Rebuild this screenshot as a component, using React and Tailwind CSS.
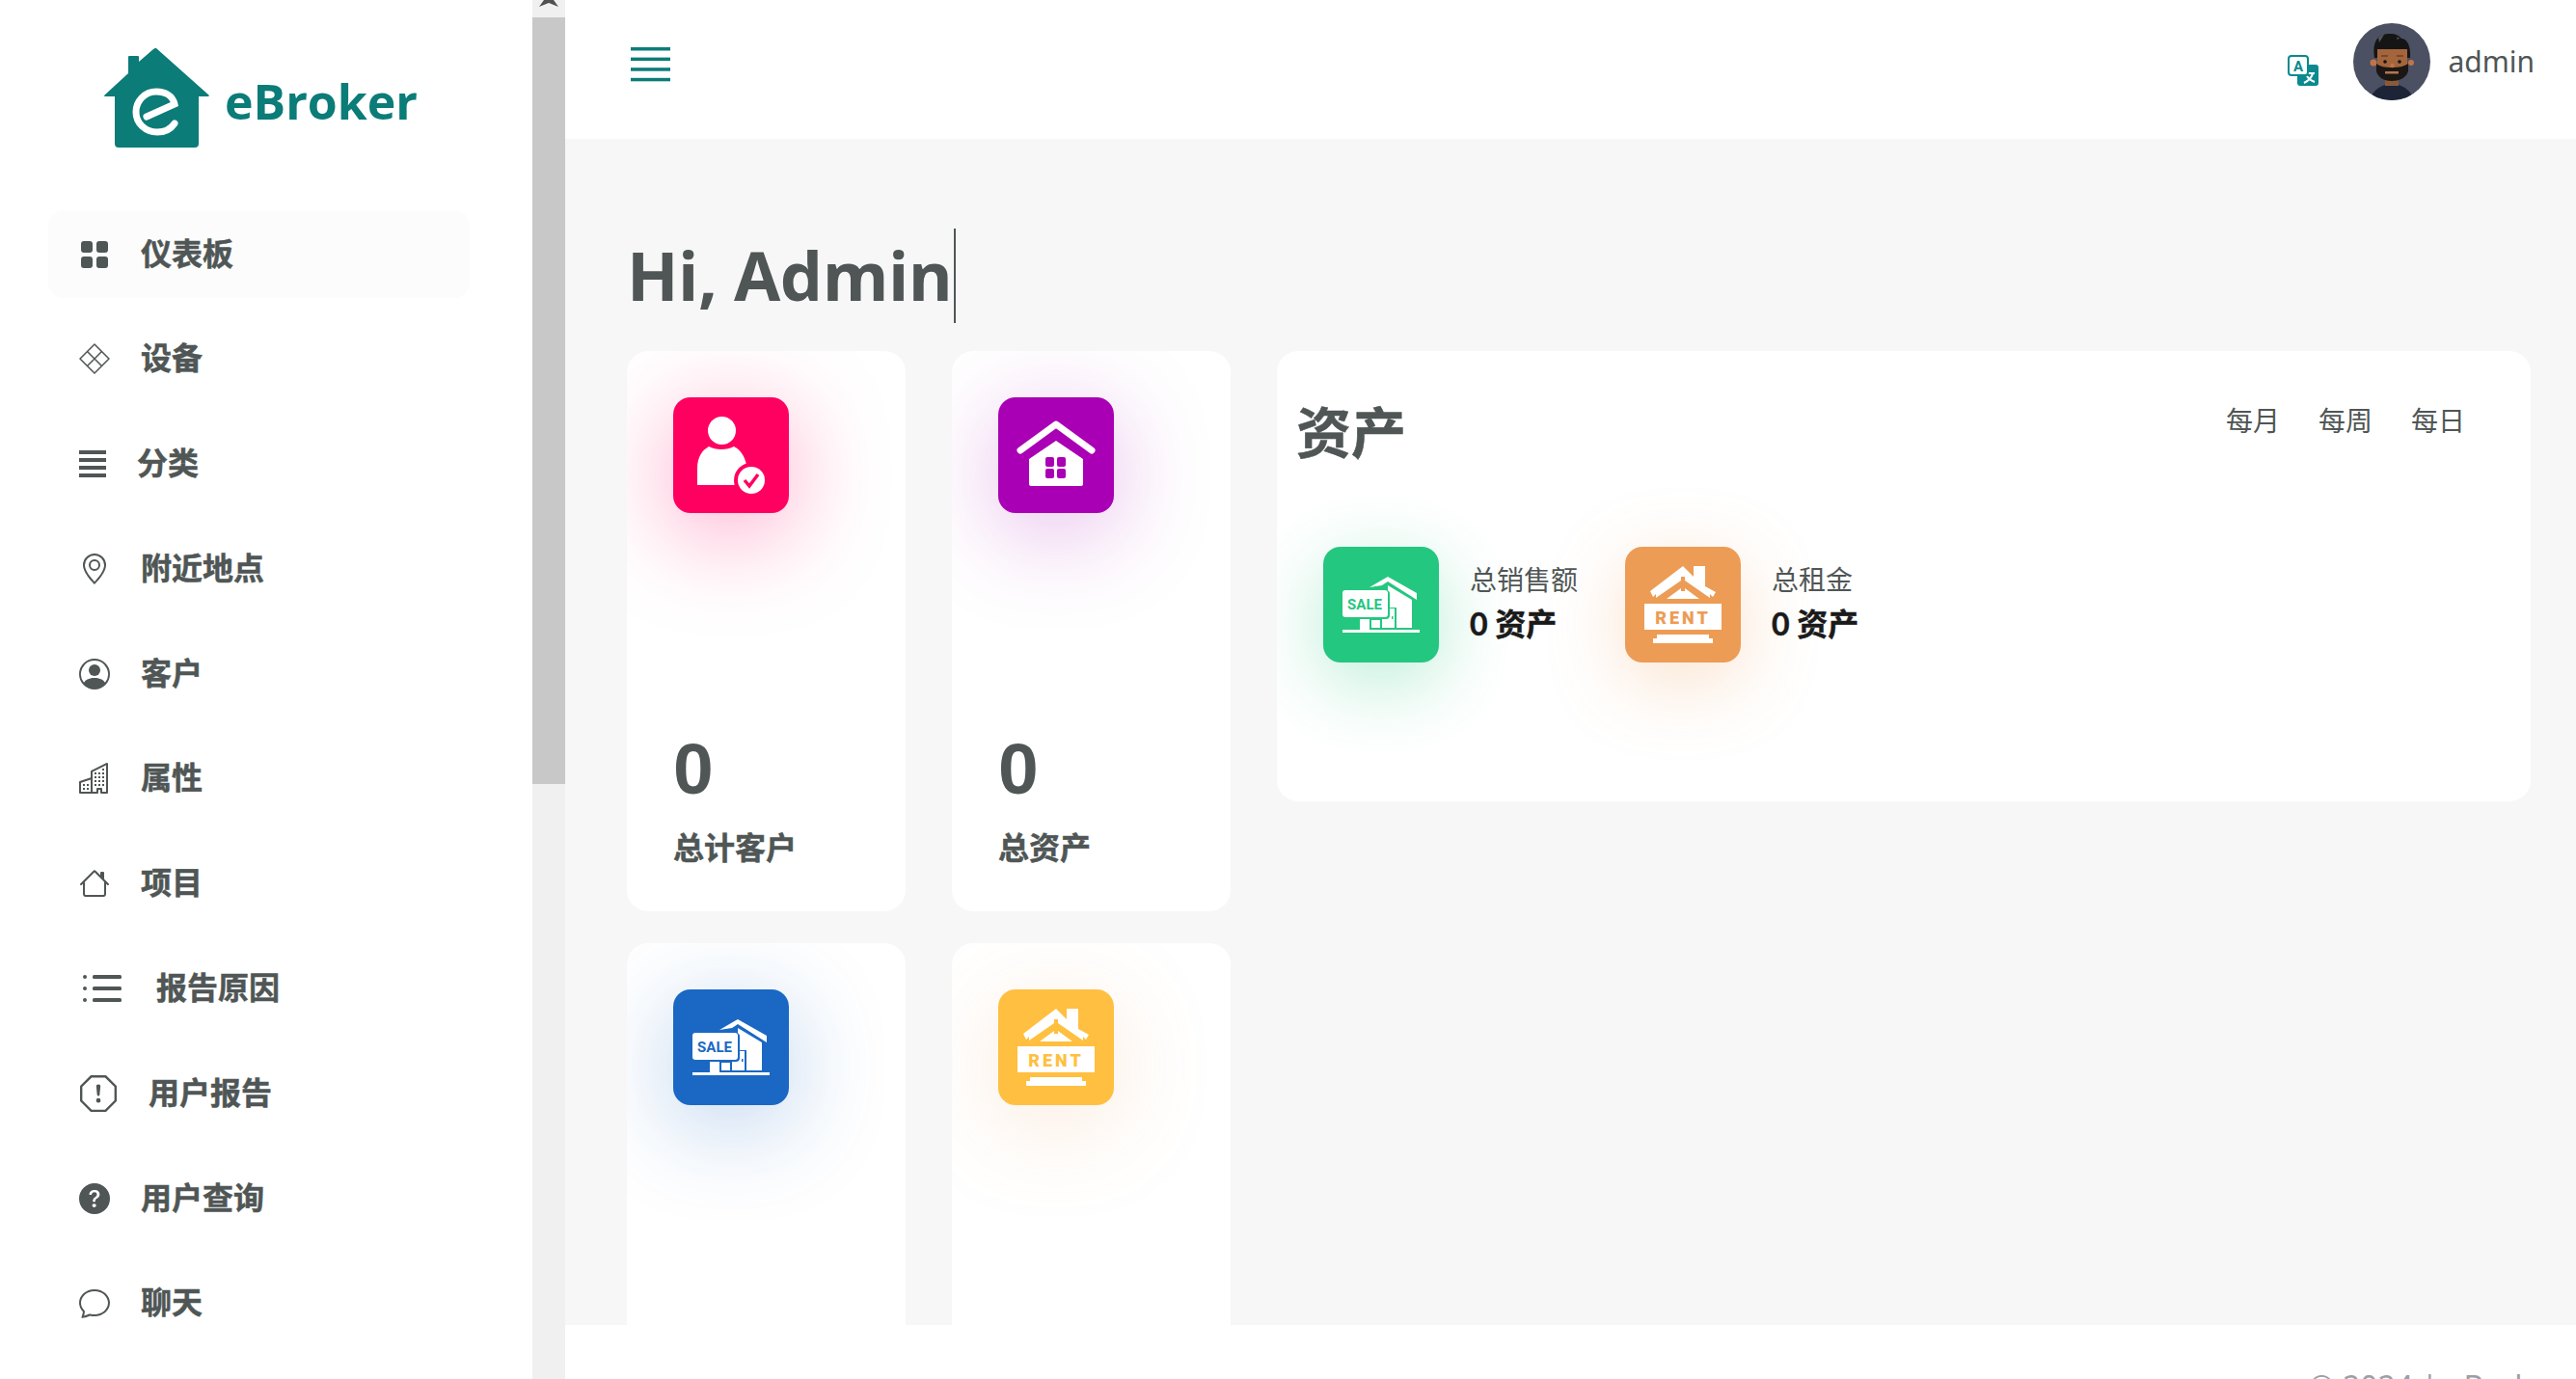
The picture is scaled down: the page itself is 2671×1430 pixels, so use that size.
import {
  BsGridFill,
  BsGeoAlt,
  BsPersonCircle,
  BsBuildings,
  BsHouse,
  BsExclamationOctagon,
  BsQuestionCircleFill,
  BsChat,
} from "react-icons/bs";

const cjk = "font-['Lato','Noto_Sans_CJK_SC',sans-serif]";
const heavy = "font-bold [-webkit-text-stroke:0.5px_currentColor]";

function DiamondIcon() {
  return (
    <svg viewBox="0 0 32 32" className="w-[32px] h-[32px]" fill="none" stroke="currentColor" strokeWidth="1.5" strokeLinejoin="round">
      <path d="M16 1 L31 16 L16 31 L1 16 Z" />
      <path d="M8.5 8.5 L23.5 23.5 M23.5 8.5 L8.5 23.5" />
    </svg>
  );
}

function BarsIcon() {
  return (
    <svg viewBox="0 0 28 28" className="w-[28px] h-[28px]" fill="currentColor">
      <rect x="0" y="0" width="28" height="4" />
      <rect x="0" y="8" width="28" height="4" />
      <rect x="0" y="16" width="28" height="4" />
      <rect x="0" y="24" width="28" height="4" />
    </svg>
  );
}

function ListIcon() {
  return (
    <svg viewBox="0 0 40 28" className="w-[40px] h-[28px]" fill="currentColor">
      <circle cx="2" cy="2" r="2" />
      <circle cx="2" cy="14" r="2" />
      <circle cx="2" cy="26" r="2" />
      <rect x="10" y="0" width="30" height="4" rx="1.5" />
      <rect x="10" y="12" width="30" height="4" rx="1.5" />
      <rect x="10" y="24" width="30" height="4" rx="1.5" />
    </svg>
  );
}

const navItems = [
  { label: "仪表板", icon: <BsGridFill size={32} />, active: true, iconBox: "w-[32px]" },
  { label: "设备", icon: <DiamondIcon />, iconBox: "w-[32px]" },
  { label: "分类", icon: <BarsIcon />, iconBox: "w-[28px]" },
  { label: "附近地点", icon: <BsGeoAlt size={32} />, iconBox: "w-[32px]" },
  { label: "客户", icon: <BsPersonCircle size={32} />, iconBox: "w-[32px]" },
  { label: "属性", icon: <BsBuildings size={32} />, iconBox: "w-[32px]" },
  { label: "项目", icon: <BsHouse size={32} />, iconBox: "w-[32px]" },
  { label: "报告原因", icon: <ListIcon />, iconBox: "w-[48px] pl-[4px]" },
  { label: "用户报告", icon: <BsExclamationOctagon size={38} />, iconBox: "w-[40px] pl-[1px]" },
  { label: "用户查询", icon: <BsQuestionCircleFill size={32} />, iconBox: "w-[32px]" },
  { label: "聊天", icon: <BsChat size={32} />, iconBox: "w-[32px]" },
];

function NavRow({ item }) {
  return (
    <div
      className={`flex items-center gap-[32px] h-[91px] mb-[17.8px] pl-[32px] rounded-[16px] text-[#4f5655] ${
        item.active ? "bg-[#fcfcfc]" : ""
      }`}
    >
      <span className={`flex items-center justify-start shrink-0 ${item.iconBox}`}>{item.icon}</span>
      <span className={`${cjk} ${heavy} text-[32px] leading-none -mt-[2px]`}>{item.label}</span>
    </div>
  );
}

function Logo() {
  return (
    <div className="flex items-start pl-[108px] pt-[50px] h-[218px]">
      <svg viewBox="0 0 109 103" className="w-[109px] h-[103px] shrink-0">
        <path
          fill="#0b7c78"
          d="M54 0 L109 49 Q109 50 107 50 L98 50 L98 99 Q98 103 94 103 L15 103 Q11 103 11 99 L11 50 L1 50 Q0 50 0 49 L25 26 L25 9 Q25 8 26 8 L35 8 Q36 8 36 9 L36 14 L51 1 Q54 -1 54 0 Z"
        />
        <path
          fill="none"
          stroke="#fff"
          strokeWidth="7"
          strokeLinecap="round"
          d="M44 71 L73 58 C71 49 63 45 54 45 C42 45 33 55 33 66 C33 78 43 87 55 87 C63 87 69 84 73 78"
        />
      </svg>
      <span className="ml-[16px] mt-[30px] font-['Open_Sans',sans-serif] font-bold text-[#0b7c78] text-[50px] leading-none">
        eBroker
      </span>
    </div>
  );
}

function Scrollbar() {
  return (
    <div className="w-[34px] h-full bg-[#f0f0f0] shrink-0 flex flex-col">
      <div className="h-[18px] flex items-start justify-center overflow-hidden">
        <svg viewBox="0 0 20 7" className="w-[20px] h-[7px]" fill="#505050">
          <path d="M0 7 L5 0 H15 L20 7 L10 3 Z" />
        </svg>
      </div>
      <div className="h-[795px] bg-[#c8c8c8]" />
    </div>
  );
}

function UserCheckIcon() {
  return (
    <svg viewBox="0 0 120 120" className="w-full h-full">
      <ellipse cx="50.5" cy="34.5" rx="14.5" ry="14.5" fill="#fff" />
      <path fill="#fff" d="M25 91 V74 C25 62 30 55 37 51 C44 55 56 55 63 51 C70 55 74 61 76 70 V91 Z" />
      <circle cx="81" cy="86" r="18" fill="#ff0061" />
      <circle cx="81" cy="86" r="14" fill="#fff" />
      <path d="M74 86 L79 92 L88 80" fill="none" stroke="#ff0061" strokeWidth="3.5" />
    </svg>
  );
}

function HomeIcon() {
  return (
    <svg viewBox="0 0 120 120" className="w-full h-full">
      <path d="M23 55 L60 28 L97 55" fill="none" stroke="#fff" strokeWidth="7" strokeLinecap="round" strokeLinejoin="round" />
      <path fill="#fff" d="M60 45 L88 64 V90 Q88 92 86 92 H34 Q32 92 32 90 V64 Z" />
      <g fill="#aa00b5">
        <rect x="49" y="62" width="9" height="10" rx="2" />
        <rect x="61" y="62" width="9" height="10" rx="2" />
        <rect x="49" y="74" width="9" height="10" rx="2" />
        <rect x="61" y="74" width="9" height="10" rx="2" />
      </g>
    </svg>
  );
}

function SaleIcon({ color }) {
  return (
    <svg viewBox="0 0 120 120" className="w-full h-full">
      <path fill="#fff" d="M48 42 L67 31 L97 48 L97 55 L67 36 L61 40 Z" />
      <path fill="#fff" d="M67 40 L92 55 V84 H76 V63 H67 Z" />
      <path fill="#fff" d="M61 64 H74 V84 H61 Z" />
      <rect x="71" y="72" width="1.5" height="3" fill={color} />
      <path fill="#fff" d="M38 74 H48 V86 H38 Z M50 76 H59 V84 H50 Z" />
      <rect x="20" y="45" width="49" height="30" rx="4" fill={color} />
      <rect x="20" y="45" width="47" height="28" rx="3" fill="#fff" />
      <text x="43" y="65" textAnchor="middle" fontFamily="Roboto, sans-serif" fontWeight="700" fontSize="15" fill={color}>
        SALE
      </text>
      <rect x="20" y="86" width="80" height="3" fill="#fff" />
    </svg>
  );
}

function RentIcon({ color }) {
  return (
    <svg viewBox="0 0 120 120" className="w-full h-full">
      <path fill="#fff" d="M26 46 L60 20 L71 31 V20 H83 V41 L94 47 L91 52 L88 49 V53 L62 35 V31 H58 V35 L32 53 V49 L29 52 Z" />
      <path fill="#fff" d="M43 54 L58 43 V46 H62 V43 L77 54 Z" />
      <rect x="20" y="59" width="80" height="27" fill="#fff" />
      <text x="60" y="79.5" textAnchor="middle" fontFamily="Roboto, sans-serif" fontWeight="900" fontSize="18" letterSpacing="3" fill={color}>
        RENT
      </text>
      <rect x="33" y="91" width="54" height="5" fill="#fff" />
      <rect x="29" y="95" width="62" height="5" fill="#fff" />
    </svg>
  );
}

function TranslateIcon() {
  return (
    <svg viewBox="0 0 32 32" className="w-[32px] h-[32px] mt-[2px]">
      <rect x="10" y="10" width="22" height="22" rx="3" fill="#0a8a8f" />
      <path d="M17 19 H28 M26 19 C25 24 21 27 17 29 M20 22 C22 25 25 27 28 28" fill="none" stroke="#fff" strokeWidth="2" />
      <rect x="1" y="1" width="20" height="20" rx="3" fill="#fff" stroke="#0a8a8f" strokeWidth="2" />
      <text x="11" y="17" textAnchor="middle" fontFamily="Roboto, sans-serif" fontWeight="700" fontSize="15" fill="#0a8a8f">
        A
      </text>
    </svg>
  );
}

function Avatar() {
  return (
    <svg viewBox="0 0 80 80" className="w-[80px] h-[80px] rounded-full shrink-0">
      <rect width="80" height="80" fill="#4b5062" />
      <ellipse cx="40" cy="86" rx="24" ry="23" fill="#1d2438" />
      <rect x="33" y="56" width="14" height="9" fill="#8a5a38" />
      <circle cx="21" cy="41" r="3.5" fill="#c0744a" />
      <circle cx="60" cy="41" r="3" fill="#c0744a" />
      <path fill="#151515" d="M22 36 C20 20 24 11 38 11 C44 11 48 13 50 16 C56 16 60 24 59 36 L56 36 L55 27 L26 27 L25 36 Z" />
      <path fill="#555" d="M26 15 C28 13 30 12 32 12 L27 20 Z M46 14 L48 16 L45 17 Z" />
      <path fill="#a5653c" d="M25 27 H56 V48 C56 54 48 56 40 56 C32 56 25 54 25 48 Z" />
      <path fill="#1a1715" d="M24 42 C28 45 33 46 40 46 C47 46 52 45 57 42 V50 C55 57 47 60 40 60 C33 60 26 57 24 50 Z" />
      <rect x="33" y="50" width="14" height="2.5" fill="#b5764a" />
      <circle cx="33" cy="40" r="1.8" fill="#111" />
      <circle cx="48" cy="40" r="1.8" fill="#111" />
      <path d="M29 34 H36 M45 34 H52" stroke="#4a2c18" strokeWidth="1.2" />
      <circle cx="40.5" cy="44" r="2.2" fill="#c0744a" />
    </svg>
  );
}

function StatCard({ color, shadow, icon, value, label }) {
  return (
    <div className="h-[581px] bg-white rounded-[22px] overflow-hidden p-[48px] pb-0 flex flex-col">
      <div className={`w-[120px] h-[120px] rounded-[18px] shrink-0 ${color} ${shadow}`}>{icon}</div>
      {value && (
        <>
          <div className="mt-[228px] font-['Liberation_Sans',sans-serif] font-bold text-[75px] leading-none text-[#4f5655]">{value}</div>
          <div className={`${cjk} ${heavy} mt-[28px] text-[32px] leading-none text-[#4f5655]`}>{label}</div>
        </>
      )}
    </div>
  );
}

function MiniStat({ color, shadow, icon, label }) {
  return (
    <div className="flex items-center gap-[32px]">
      <div className={`w-[120px] h-[120px] rounded-[18px] shrink-0 ${color} ${shadow}`}>{icon}</div>
      <div className={`${cjk} flex flex-col gap-[15px] mb-[5px]`}>
        <div className="text-[28px] leading-[30px] text-[#4f5655]">{label}</div>
        <div className={`${heavy} text-[32px] leading-[32px] text-[#1a1a1a]`}>0 资产</div>
      </div>
    </div>
  );
}

export default function App() {
  return (
    <div className="flex w-[2671px] h-[1430px] overflow-hidden bg-white">
      <aside className="w-[586px] h-full flex shrink-0">
        <div className="w-[552px] h-full overflow-hidden">
          <Logo />
          <nav className="pl-[50px] pr-[65px]">
            {navItems.map((item) => (
              <NavRow key={item.label} item={item} />
            ))}
          </nav>
        </div>
        <Scrollbar />
      </aside>

      <main className="flex-1 min-w-0 h-full flex flex-col">
        <header className="h-[144px] shrink-0 bg-white flex items-center pl-[68px] pr-[43px]">
          <svg viewBox="0 0 41 36" className="w-[41px] h-[36px] -mt-[10px]" fill="#0b7c78">
            <rect y="0" width="41" height="3.5" />
            <rect y="10.6" width="41" height="3.5" />
            <rect y="21.2" width="41" height="3.5" />
            <rect y="31.8" width="41" height="3.5" />
          </svg>
          <div className="ml-auto flex items-center">
            <TranslateIcon />
            <div className="ml-[36px] -mt-[16px] flex items-center gap-[18px]">
              <Avatar />
              <span className="font-['Noto_Sans',sans-serif] text-[30px] leading-none text-[#4f5655]">admin</span>
            </div>
          </div>
        </header>

        <section className="flex-1 min-h-0 overflow-hidden bg-[#f7f7f7] pl-[64px] pr-[47px] pt-[93px]">
          <div className="h-[98px] flex items-center">
            <h1 className="font-['Open_Sans',sans-serif] font-bold text-[70px] tracking-[-0.5px] leading-none text-[#4f5655] -mt-[2px]">Hi, Admin</h1>
            <span className="w-[2px] h-[98px] bg-[#4f5655] ml-[2px]" />
          </div>

          <div className="mt-[29px] flex gap-[48px] items-start">
            <div className="grid grid-cols-[289px_289px] gap-x-[48px] gap-y-[33px] shrink-0">
              <StatCard
                color="bg-[#ff0061]"
                shadow="shadow-[0_20px_100px_rgba(255,0,97,0.35)]"
                icon={<UserCheckIcon />}
                value="0"
                label="总计客户"
              />
              <StatCard
                color="bg-[#aa00b5]"
                shadow="shadow-[0_20px_100px_rgba(170,0,181,0.28)]"
                icon={<HomeIcon />}
                value="0"
                label="总资产"
              />
              <StatCard
                color="bg-[#1a68c4]"
                shadow="shadow-[0_20px_100px_rgba(26,104,196,0.3)]"
                icon={<SaleIcon color="#1a68c4" />}
              />
              <StatCard
                color="bg-[#ffbf40]"
                shadow="shadow-[0_20px_100px_rgba(237,156,85,0.22)]"
                icon={<RentIcon color="#ffbf40" />}
              />
            </div>

            <div className="flex-1 h-[467px] bg-white rounded-[22px] overflow-hidden">
              <div className={`${cjk} flex items-start justify-between pl-[20px] pr-[68px] pt-[52px]`}>
                <h2 className={`${heavy} text-[57px] leading-[64px] text-[#4f5655]`}>资产</h2>
                <div className="flex gap-[40px] text-[28px] leading-[34px] text-[#4f5655] pt-[3px]">
                  <span>每月</span>
                  <span>每周</span>
                  <span>每日</span>
                </div>
              </div>
              <div className="flex gap-[49px] pl-[48px] mt-[87px]">
                <MiniStat
                  color="bg-[#24c77f]"
                  shadow="shadow-[0_20px_80px_rgba(36,199,127,0.32)]"
                  icon={<SaleIcon color="#24c77f" />}
                  label="总销售额"
                />
                <MiniStat
                  color="bg-[#ed9c55]"
                  shadow="shadow-[0_20px_80px_rgba(237,156,85,0.3)]"
                  icon={<RentIcon color="#ed9c55" />}
                  label="总租金"
                />
              </div>
            </div>
          </div>
        </section>

        <footer className="h-[56px] shrink-0 bg-white pl-[1808px] pt-[44px] overflow-hidden">
          <span className="font-['Noto_Sans',sans-serif] text-[32px] leading-[40px] whitespace-nowrap text-[#9aa0a8]">© 2024 | eBroker</span>
        </footer>
      </main>
    </div>
  );
}
